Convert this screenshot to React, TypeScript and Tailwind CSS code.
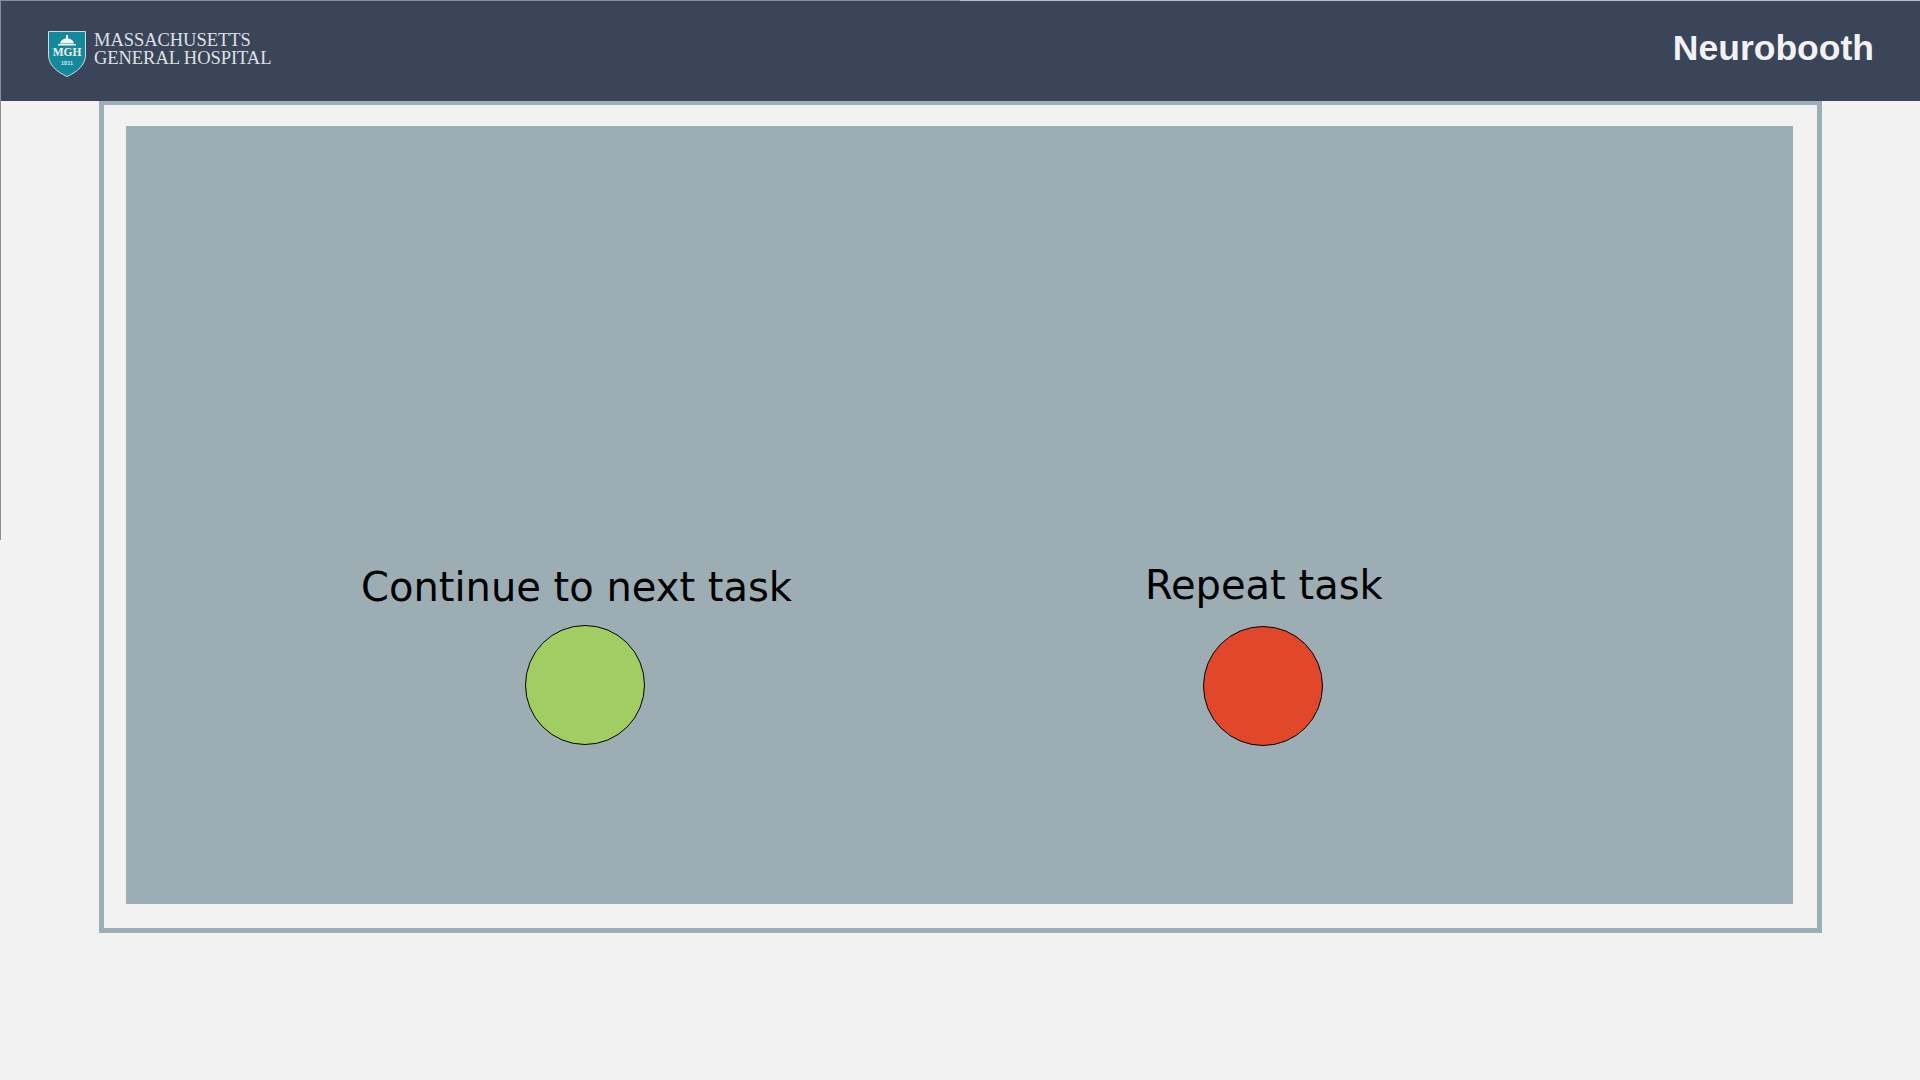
function MghLogo() {
  return (
    <svg width="38" height="46" viewBox="0 0 38 46" className="mt-[5px] shrink-0">
      <path d="M0.5 0.5H37.5V24C37.5 34 29 41 19 45.5C9 41 0.5 34 0.5 24Z" fill="#14899c" stroke="#c9dde2" strokeWidth="1" />
      <path d="M12 12.5C12.5 9.5 15 7.5 19 7.5C23 7.5 25.5 9.5 26 12.5Z" fill="#f2f2f2" />
      <rect x="18" y="4" width="2" height="4" fill="#f2f2f2" />
      <rect x="10" y="13" width="18" height="1.5" fill="#f2f2f2" />
      <text x="19" y="25" textAnchor="middle" fontFamily="Liberation Serif" fontWeight="700" fontSize="11.5" fill="#f2f2f2">MGH</text>
      <text x="19" y="34" textAnchor="middle" fontFamily="Liberation Sans" fontWeight="700" fontSize="5.5" fill="#d7e8ec">1811</text>
    </svg>
  );
}

export default function App() {
  return (
    <div className="relative h-[1080px] w-[1920px] overflow-hidden bg-[#f2f2f2]">
      {/* stray window outline left over in the capture */}
      <div className="absolute left-0 top-0 z-10 h-[540px] w-[960px] border-l border-t border-[#8b8d9c]" />

      <header className="flex h-[101px] items-center justify-between border-t border-[#b9bdc5] bg-[#3a4559] pl-[48px] pr-[46px]">
        <div className="flex items-center gap-[8px]">
          <MghLogo />
          <div className="mb-[4px] font-['Liberation_Serif',serif] text-[#dfe1e4] text-[18.5px] leading-[18px] tracking-[-0.05px]">
            <div>MASSACHUSETTS</div>
            <div>GENERAL HOSPITAL</div>
          </div>
        </div>
        <div className="mb-[4px] font-['Liberation_Sans',sans-serif] text-[35.5px] font-bold text-[#f2f2f4]">Neurobooth</div>
      </header>

      <main className="ml-[99px] h-[832px] w-[1723px] border-[5px] border-t-[4px] border-[#9cafb6] pl-[22px] pt-[21px]">
        <div className="flex h-[778px] w-[1667px] bg-[#9caeb4] font-['DejaVu_Sans',sans-serif] text-[40px] leading-[47px] text-black">
          <div className="ml-[235px] flex w-[784px] flex-col items-start pt-[438px]">
            <div>Continue to next task</div>
            <div className="ml-[164px] mt-[14px] h-[120px] w-[120px] rounded-full border border-black bg-[#a2cd62]" />
          </div>
          <div className="flex flex-col items-start pt-[436px]">
            <div>Repeat task</div>
            <div className="ml-[58px] mt-[17px] h-[120px] w-[120px] rounded-full border border-black bg-[#e1472b]" />
          </div>
        </div>
      </main>
    </div>
  );
}
